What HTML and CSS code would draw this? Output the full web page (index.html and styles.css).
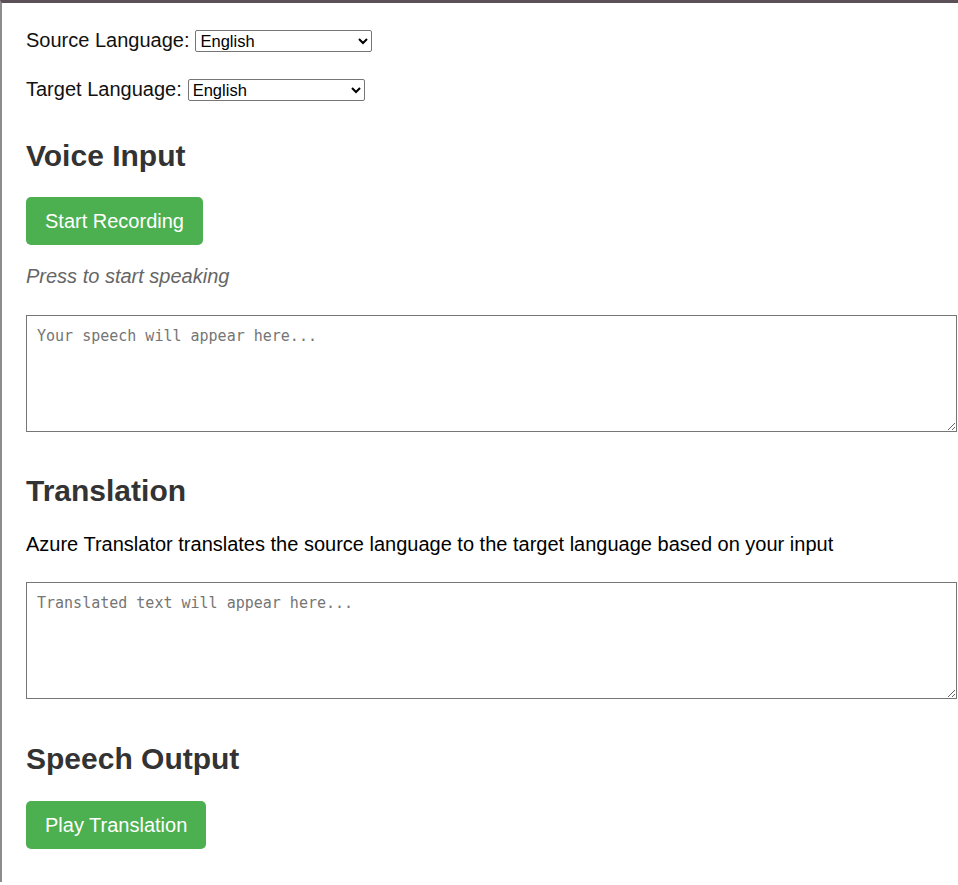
FILE: index.html
```html
<!DOCTYPE html>
<html lang="en">
<head>
<meta charset="utf-8">
<title>Speech Translator</title>
<link rel="stylesheet" href="styles.css">
</head>
<body>
<main class="app">
  <div class="field field-first">
    <label for="src">Source Language:</label>
    <select id="src" class="lang-select lang-src">
      <option>English</option>
      <option>Spanish</option>
      <option>French</option>
    </select>
  </div>
  <div class="field">
    <label for="tgt">Target Language:</label>
    <select id="tgt" class="lang-select lang-tgt">
      <option>English</option>
      <option>Spanish</option>
      <option>French</option>
    </select>
  </div>

  <h2 class="section-title title-voice">Voice Input</h2>
  <button class="btn btn-record" type="button">Start Recording</button>
  <p class="status">Press to start speaking</p>
  <textarea class="text-box box-speech" placeholder="Your speech will appear here..."></textarea>

  <h2 class="section-title title-translation">Translation</h2>
  <p class="desc">Azure Translator translates the source language to the target language based on your input</p>
  <textarea class="text-box box-translation" placeholder="Translated text will appear here..."></textarea>

  <h2 class="section-title title-output">Speech Output</h2>
  <button class="btn btn-play" type="button">Play Translation</button>
</main>
</body>
</html>
```

FILE: styles.css
```css
html, body {
  margin: 0;
  padding: 0;
  background: #ffffff;
}

body {
  border-top: 3px solid #5b5058;
  border-left: 2px solid #8c8c8c;
  min-height: 882px;
  box-sizing: border-box;
  font-family: "Liberation Sans", Arial, sans-serif;
  font-size: 20px;
  color: #000;
  overflow: hidden;
}

.app {
  padding: 0 0 0 24px;
}

.field {
  display: flex;
  align-items: center;
  gap: 6px;
  height: 25px;
  margin-top: 24px;
}

.field-first {
  margin-top: 25px;
}

.field label {
  line-height: 23px;
  color: #111;
}

.lang-select {
  font-family: "Liberation Sans", Arial, sans-serif;
  font-size: 16.5px;
  height: 22px;
  padding: 0;
  border: 1px solid #767676;
  border-radius: 2px;
  background: #fff;
  color: #000;
  box-sizing: border-box;
}

.lang-src { width: 177px; }
.lang-tgt { width: 177px; }

.section-title {
  margin: 0;
  font-size: 30px;
  font-weight: bold;
  line-height: 34px;
  color: #333;
}

.title-voice { margin-top: 37px; }
.title-translation { margin-top: 42px; }
.title-output { margin-top: 43px; }

.btn {
  display: block;
  background: #4caf50;
  color: #fff;
  border: none;
  border-radius: 5px;
  font-family: "Liberation Sans", Arial, sans-serif;
  font-size: 20px;
  line-height: 24px;
  padding: 12px 19px;
  cursor: pointer;
}

.btn-record { margin-top: 24px; }
.btn-play { margin-top: 25px; }

.status {
  margin: 20px 0 0;
  line-height: 23px;
  font-style: italic;
  color: #666;
}

.desc {
  margin: 25px 0 0;
  line-height: 23px;
  color: #000;
}

.text-box {
  display: block;
  width: 931px;
  height: 117px;
  box-sizing: border-box;
  padding: 10px;
  border: 1px solid #767676;
  font-family: "DejaVu Sans Mono", "Liberation Mono", monospace;
  font-size: 15px;
  line-height: 20px;
  color: #000;
  background: #fff;
}

.text-box::placeholder {
  color: #757575;
}

.box-speech { margin-top: 27px; }
.box-translation { margin-top: 26px; }
```
